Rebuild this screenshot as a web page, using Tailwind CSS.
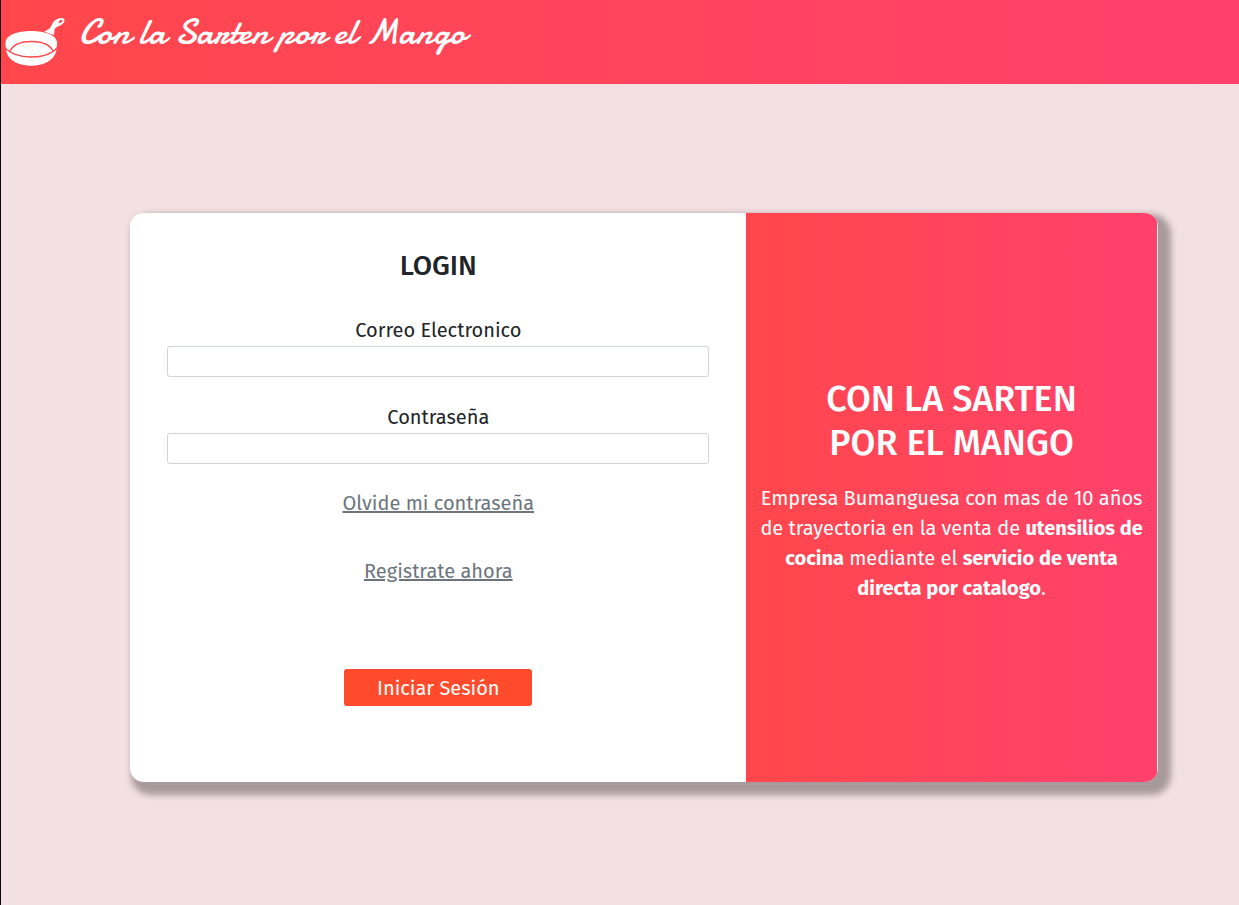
<!DOCTYPE html>
<html lang="es">
<head>
<meta charset="utf-8">
<meta name="viewport" content="width=device-width, initial-scale=1">
<title>Con la Sarten por el Mango</title>
<script src="https://cdn.jsdelivr.net/npm/@tailwindcss/browser@4"></script>
</head>
<body class="min-h-screen border-l border-[#0b0610] bg-[#f3e0e2] font-['Fira_Sans','Noto_Sans',sans-serif] text-[20px] leading-[30px] text-[#212529]">
  <header class="flex h-[84px] items-start bg-linear-to-r from-[#ff474b] to-[#ff416c] pl-1 text-white">
    <svg class="mt-4 h-[52px] w-[62px] shrink-0" viewBox="0 0 62 52" fill="none" aria-hidden="true">
      <path fill="#fff" d="M39 15.500C44 14 46 11 47.500 7.500C49 4 53 2.500 56 2C60 1.500 60.500 5 58 7.500C55.500 10 52.500 10 50.500 12C49 13.500 49.500 16 49 19Z"/>
      <ellipse cx="55.500" cy="5.500" rx="2.200" ry="1.200" fill="#ff474b" transform="rotate(-38 55.500 5.500)"/>
      <path fill="#fff" d="M0.500 27C0.500 19 12 15 26 15C40 15 52 19 52 27C52 30 51.500 33 51 36C48 45 38 49.700 26.500 49.700C14 49.700 4 45 1.500 36C1 33 0.500 30 0.500 27Z"/>
      <path stroke="#ff474b" stroke-width="1.300" d="M0 31.500C4 37 14 41 26.500 41C39 41 48 37 52.500 31.500M5 35C8 29 16 25.500 26.500 25.500C37 25.500 45 29 48 35"/>
    </svg>
    <a href="#" class="ml-3 mt-2 font-['Satisfy','Damion','Cookie','Yellowtail','Kaushan_Script',cursive] text-[37px] leading-12">Con la Sarten por el Mango</a>
  </header>
  <main class="ml-[10.45%] w-[83%] py-[129px]">
    <section class="grid grid-cols-[3fr_2fr] overflow-hidden rounded-[14px] bg-white pr-px text-center shadow-[7px_7px_6px_6px_#a89a9c]">
      <form class="flex flex-col items-center px-[37px] pt-9 pb-[76px]">
        <h1 class="mb-8 text-[28px] leading-[34px] font-medium">LOGIN</h1>
        <label for="correo">Correo Electronico</label>
        <input id="correo" type="email" class="mt-px mb-[25px] h-[31px] w-full rounded-[3px] border border-[#ced4da] bg-white px-2">
        <label for="clave">Contraseña</label>
        <input id="clave" type="password" class="mt-px mb-6 h-[31px] w-full rounded-[3px] border border-[#ced4da] bg-white px-2">
        <a href="#" class="mb-[38px] text-[#6c757d] underline">Olvide mi contraseña</a>
        <a href="#" class="mb-[83px] text-[#6c757d] underline">Registrate ahora</a>
        <button type="submit" class="h-[37px] w-[188px] rounded-[3px] bg-[#ff4b2b] text-white">Iniciar Sesión</button>
      </form>
      <aside class="flex flex-col items-center justify-center bg-linear-to-r from-[#ff474b] to-[#ff416c] px-3 pb-4 text-white">
        <h2 class="mb-[18px] text-[36px] leading-11 font-medium">CON LA SARTEN<br>POR EL MANGO</h2>
        <p>Empresa Bumanguesa con mas de 10 años<br>de trayectoria en la venta de <strong>utensilios de<br>cocina</strong> mediante el <strong>servicio de venta<br>directa por catalogo</strong>.</p>
      </aside>
    </section>
  </main>
</body>
</html>
